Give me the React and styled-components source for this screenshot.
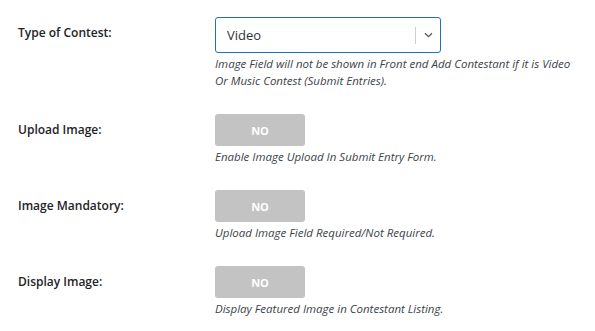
import styled, { createGlobalStyle } from "styled-components";

const GlobalStyle = createGlobalStyle`
  body {
    margin: 0;
    background: #ffffff;
    font-family: "Open Sans", "Noto Sans", sans-serif;
    color: #1d2327;
  }
`;

const settings = [
  {
    label: "Type of Contest:",
    control: "select",
    value: "Video",
    description:
      "Image Field will not be shown in Front end Add Contestant if it is Video Or Music Contest (Submit Entries).",
  },
  {
    label: "Upload Image:",
    control: "toggle",
    description: "Enable Image Upload In Submit Entry Form.",
  },
  {
    label: "Image Mandatory:",
    control: "toggle",
    description: "Upload Image Field Required/Not Required.",
  },
  {
    label: "Display Image:",
    control: "toggle",
    description: "Display Featured Image in Contestant Listing.",
  },
];

export default function App() {
  return (
    <>
      <GlobalStyle />
      <Table>
        {settings.map((s) => (
          <Row key={s.label}>
            <Label>{s.label}</Label>
            <Field>
              {s.control === "select" ? (
                <Select>
                  <SelectValue>{s.value}</SelectValue>
                  <SelectArrow>
                    <svg width="9" height="6" viewBox="0 0 9 6">
                      <path
                        d="M1 1.2 L4.5 4.6 L8 1.2"
                        fill="none"
                        stroke="#50575e"
                        strokeWidth="1.3"
                      />
                    </svg>
                  </SelectArrow>
                </Select>
              ) : (
                <Toggle>NO</Toggle>
              )}
              <Description>{s.description}</Description>
            </Field>
          </Row>
        ))}
      </Table>
    </>
  );
}

const Table = styled.div`
  display: flex;
  flex-direction: column;
  padding: 2px 0 0 18px;
`;

const Row = styled.div`
  display: grid;
  grid-template-columns: 197px 1fr;
`;

const Label = styled.div`
  padding-top: 22px;
  font-size: 12px;
  font-weight: 600;
  line-height: 18px;
  color: #1d2327;
`;

const Field = styled.div`
  display: flex;
  flex-direction: column;
  align-items: flex-start;
  padding: 15px 10px 10px 0;
`;

const Select = styled.div`
  box-sizing: border-box;
  display: flex;
  align-items: center;
  width: 226px;
  height: 36px;
  border: 1px solid #2271b1;
  border-radius: 3px;
  background: #fff;
`;

const SelectValue = styled.span`
  flex: 1;
  padding-left: 11px;
  font-size: 13px;
  color: #2c3338;
`;

const SelectArrow = styled.span`
  display: flex;
  align-items: center;
  justify-content: center;
  width: 24px;
  height: 17px;
  border-left: 1px solid #cfcfcf;
`;

const Toggle = styled.div`
  display: flex;
  align-items: center;
  justify-content: center;
  width: 90px;
  height: 32px;
  border-radius: 3px;
  background: #c3c3c3;
  color: #fff;
  font-size: 11px;
  font-weight: 700;
`;

const Description = styled.p`
  margin: 2px 0 0;
  max-width: 370px;
  font-size: 11.5px;
  font-style: italic;
  line-height: 17px;
  color: #3c434a;
`;
